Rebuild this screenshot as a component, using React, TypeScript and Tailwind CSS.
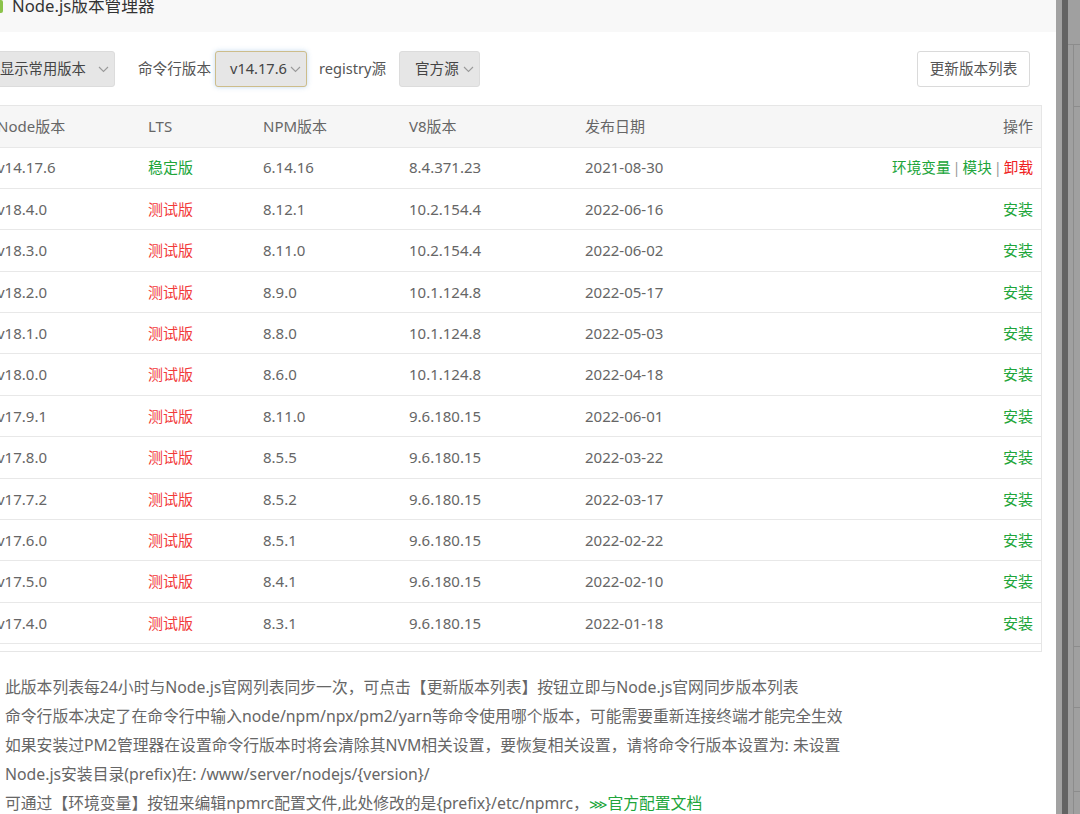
import React from "react";

const rows: [string, boolean, string, string, string][] = [
  ["v14.17.6", true, "6.14.16", "8.4.371.23", "2021-08-30"],
  ["v18.4.0", false, "8.12.1", "10.2.154.4", "2022-06-16"],
  ["v18.3.0", false, "8.11.0", "10.2.154.4", "2022-06-02"],
  ["v18.2.0", false, "8.9.0", "10.1.124.8", "2022-05-17"],
  ["v18.1.0", false, "8.8.0", "10.1.124.8", "2022-05-03"],
  ["v18.0.0", false, "8.6.0", "10.1.124.8", "2022-04-18"],
  ["v17.9.1", false, "8.11.0", "9.6.180.15", "2022-06-01"],
  ["v17.8.0", false, "8.5.5", "9.6.180.15", "2022-03-22"],
  ["v17.7.2", false, "8.5.2", "9.6.180.15", "2022-03-17"],
  ["v17.6.0", false, "8.5.1", "9.6.180.15", "2022-02-22"],
  ["v17.5.0", false, "8.4.1", "9.6.180.15", "2022-02-10"],
  ["v17.4.0", false, "8.3.1", "9.6.180.15", "2022-01-18"],
];

function Chevron() {
  return (
    <svg width="11" height="7" viewBox="0 0 11 7" className="shrink-0">
      <polyline points="1,1 5.5,5.5 10,1" fill="none" stroke="#9a9a9a" strokeWidth="1.1" />
    </svg>
  );
}

export default function App() {
  return (
    <div className="flex h-[814px] w-[1080px] overflow-hidden bg-white font-['Noto_Sans','Noto_Sans_CJK_SC',sans-serif]">
      <div className="flex w-[1056px] shrink-0 flex-col overflow-hidden bg-white">
        {/* title bar */}
        <div className="flex h-[32px] shrink-0 items-start bg-[#f8f8f8]">
          <div className="ml-[-9px] h-[13px] w-[12px] shrink-0 rounded-[2px] bg-[#8bc34a]" />
          <div className="ml-[9px] mt-[-6px] text-[16.7px] leading-[24px] text-[#333]">Node.js版本管理器</div>
        </div>

        {/* body */}
        <div className="ml-[-13px] flex w-[1055px] shrink-0 flex-col">
          {/* toolbar */}
          <div className="mt-[19px] flex h-[36px] items-center text-[14.6px] text-[#555]">
            <div className="ml-[2px] flex h-[36px] w-[126px] shrink-0 items-center justify-between rounded-[3px] border border-[#dcdcdc] bg-[#e6e6e6] pl-[10px] pr-[5px] text-[#444]">
              <span className="text-[14.3px]">显示常用版本</span>
              <Chevron />
            </div>
            <span className="ml-[23px] shrink-0">命令行版本</span>
            <div className="ml-[4px] flex h-[36px] w-[92px] shrink-0 items-center justify-between rounded-[3px] border border-[#cdbd8b] bg-[#e6e6e6] pl-[14px] pr-[5px] text-[#444] shadow-[0_0_5px_rgba(120,170,220,0.45)]">
              <span>v14.17.6</span>
              <Chevron />
            </div>
            <span className="ml-[12px] w-[77px] shrink-0">registry源</span>
            <div className="ml-[3px] flex h-[36px] w-[81px] shrink-0 items-center justify-between rounded-[3px] border border-[#dcdcdc] bg-[#e6e6e6] pl-[15px] pr-[5px] text-[#444]">
              <span>官方源</span>
              <Chevron />
            </div>
            <div className="ml-auto mr-[12px] flex h-[36px] w-[113px] shrink-0 items-center justify-center rounded-[3px] border border-[#dadada] bg-white text-[#555]">
              更新版本列表
            </div>
          </div>

          {/* table container */}
          <div className="mt-[18px] h-[547px] border-b border-r border-t border-[#e6e6e6] pb-[7px]">
            <table className="w-full table-fixed border-collapse text-left text-[15px] text-[#666]">
              <colgroup>
                <col className="w-[151px]" />
                <col className="w-[115px]" />
                <col className="w-[146px]" />
                <col className="w-[176px]" />
                <col className="w-[175px]" />
                <col />
              </colgroup>
              <thead>
                <tr className="h-[41px] bg-[#f6f6f6] text-[#666]">
                  <th className="px-[10px] font-normal">Node版本</th>
                  <th className="px-[10px] font-normal">LTS</th>
                  <th className="px-[10px] font-normal">NPM版本</th>
                  <th className="px-[10px] font-normal">V8版本</th>
                  <th className="px-[10px] font-normal">发布日期</th>
                  <th className="pl-[10px] pr-[8px] text-right font-normal">操作</th>
                </tr>
              </thead>
              <tbody>
                {rows.map((r, i) => (
                  <tr key={i} className="h-[41.4px] border-t border-[#e8e8e8]">
                    <td className="px-[10px]">{r[0]}</td>
                    <td className={"px-[10px] " + (r[1] ? "text-[#20a53a]" : "text-[#f23b3b]")}>
                      {r[1] ? "稳定版" : "测试版"}
                    </td>
                    <td className="px-[10px]">{r[2]}</td>
                    <td className="px-[10px]">{r[3]}</td>
                    <td className="px-[10px]">{r[4]}</td>
                    <td className="pl-[10px] pr-[8px] text-right">
                      {r[1] ? (
                        <span className="text-[14.6px]">
                          <span className="text-[#20a53a]">环境变量</span>
                          <span className="mx-[2px] text-[#999]">|</span>
                          <span className="text-[#20a53a]">模块</span>
                          <span className="mx-[2px] text-[#999]">|</span>
                          <span className="text-[#ef2020]">卸载</span>
                        </span>
                      ) : (
                        <span className="text-[#20a53a]">安装</span>
                      )}
                    </td>
                  </tr>
                ))}
                <tr className="border-t border-[#e8e8e8]">
                  <td colSpan={6} />
                </tr>
              </tbody>
            </table>
          </div>

          {/* notes */}
          <div className="ml-[18px] mt-[21px] flex flex-col text-[15.8px] leading-[29px] text-[#666]">
            <div className="whitespace-nowrap">此版本列表每24小时与Node.js官网列表同步一次，可点击【更新版本列表】按钮立即与Node.js官网同步版本列表</div>
            <div className="whitespace-nowrap">命令行版本决定了在命令行中输入node/npm/npx/pm2/yarn等命令使用哪个版本，可能需要重新连接终端才能完全生效</div>
            <div className="whitespace-nowrap">如果安装过PM2管理器在设置命令行版本时将会清除其NVM相关设置，要恢复相关设置，请将命令行版本设置为: 未设置</div>
            <div className="whitespace-nowrap">Node.js安装目录(prefix)在: /www/server/nodejs/&#123;version&#125;/</div>
            <div className="whitespace-nowrap">
              可通过【环境变量】按钮来编辑npmrc配置文件,此处修改的是&#123;prefix&#125;/etc/npmrc，
              <span className="text-[#20a53a]">
                <span className="font-['DejaVu_Sans',sans-serif] text-[13px]">⋙</span>官方配置文档
              </span>
            </div>
          </div>
        </div>
      </div>

      {/* backdrop strip */}
      <div className="flex flex-1">
        <div className="w-[6px] bg-[#a2a2a2]" />
        <div className="w-[6px] bg-[#636363]" />
        <div className="flex flex-1 flex-col bg-[#a0a0a0]">
          <div className="h-[45px] border-b border-[#8c8c8c]" />
          <div className="ml-[5px] flex flex-1 flex-col border-l border-[#8c8c8c]">
            <div className="h-[62px] border-b border-[#8c8c8c]" />
            <div className="h-[540px] border-b border-[#8c8c8c]" />
            <div className="h-[61px] border-b border-[#8c8c8c]" />
            <div className="h-[84px] border-b border-[#8c8c8c]" />
            <div className="flex-1" />
          </div>
        </div>
      </div>
    </div>
  );
}
